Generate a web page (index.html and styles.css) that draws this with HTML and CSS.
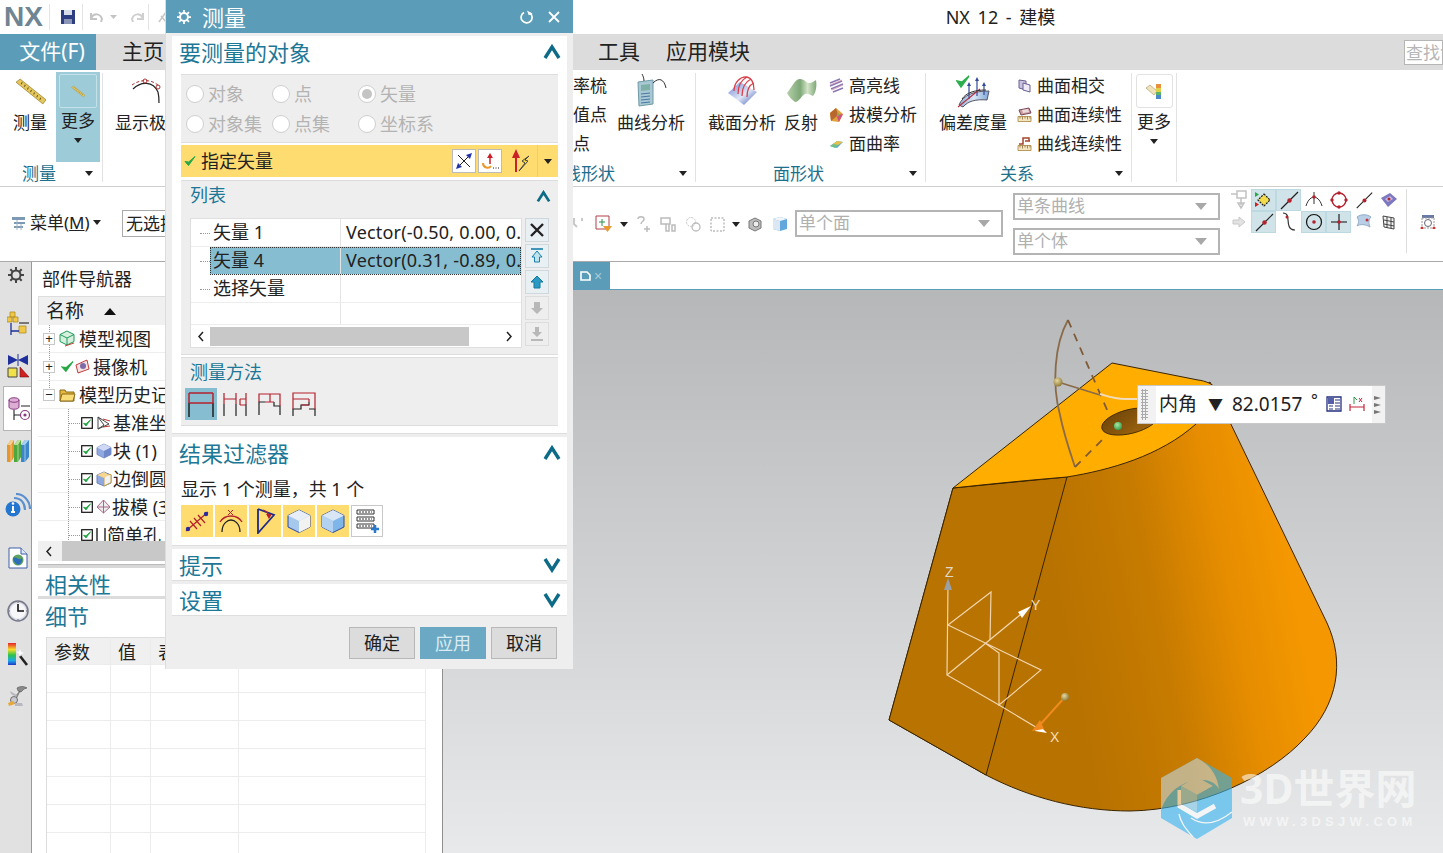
FILE: index.html
```html
<!DOCTYPE html>
<html lang="zh">
<head>
<meta charset="utf-8">
<title>NX 12 - 建模</title>
<link rel="stylesheet" href="styles.css">
</head>
<body>
<svg class="defs" width="0" height="0">
  <symbol id="up" viewBox="0 0 18 16"><path d="M2 14 9 3l7 11" fill="none" stroke="#0d6b87" stroke-width="3.4"/></symbol>
  <symbol id="down" viewBox="0 0 18 16"><path d="M2 2l7 11 7-11" fill="none" stroke="#0d6b87" stroke-width="3.4"/></symbol>
  <symbol id="check" viewBox="0 0 12 12"><path d="M1 6.5 4.5 10.5 11 1.5 4.7 7z" fill="#27a846" stroke="#27a846" stroke-width="1"/></symbol>
  <symbol id="cbox" viewBox="0 0 12 12"><rect x=".7" y=".7" width="10.6" height="10.6" fill="#fff" stroke="#111" stroke-width="1.2"/><path d="M2.5 6.2 5 9l4.6-6.2L5 6.8z" fill="#1fa33f" stroke="#1fa33f" stroke-width=".8"/></symbol>
  <symbol id="cube" viewBox="0 0 16 16"><path d="M8 1 15 4.5V11.500L8 15 1 11.500V4.500z" fill="#8fa8e0" stroke="#6d82b8" stroke-width=".8"/><path d="M1 4.500 8 8l7-3.500L8 1z" fill="#cfd9f3"/><path d="M8 8v7l7-3.500V4.500z" fill="#6f88c9"/></symbol>
  <symbol id="bigcube" viewBox="0 0 26 26"><path d="M13 2 24 7.500V19L13 24.500 2 19V7.500z" fill="#a6c8ec" stroke="#2c4aa0" stroke-width="1"/><path d="M2 7.500 13 13 24 7.500 13 2z" fill="#e8eef8"/><path d="M13 13V24.500L24 19V7.500z" fill="#f2f2f2"/></symbol>
  <symbol id="ruler" viewBox="0 0 30 26"><path d="M1 4 5 1l25 20-3 4z" fill="#e6c75a" stroke="#a08a40" stroke-width=".8"/><path d="M7 4l-1 2M10 6.500l-1 2M13 9l-1 2M16 11.500l-1 2M19 14l-1 2M22 16.500l-1 2M25 19l-1 2" stroke="#6b5a20" stroke-width="1"/></symbol>
  <symbol id="tan" viewBox="0 0 15 6"><path d="M1 .5h13v5H1z" fill="#f3e4c2" stroke="#b89a5a"/><path d="M3 .5v2M5.500 .5v3M8 .5v2M10.500 .5v3M13 .5v2" stroke="#8a6f38" stroke-width=".8"/></symbol>
  <symbol id="caret" viewBox="0 0 8 5"><path d="M0 0h8L4 5z" fill="#222"/></symbol>
  <symbol id="gcaret" viewBox="0 0 12 7"><path d="M0 0h12L6 7z" fill="#a8a8a8"/></symbol>
  <symbol id="node" viewBox="0 0 22 22"><path d="M3 20 20 3" stroke="#222" stroke-width="1.200"/><circle cx="11.500" cy="11.500" r="2.200" fill="#b4202c"/></symbol>
</svg>

<header class="titlebar">
  <div class="qa">
    <span class="nx">NX</span>
    <i class="qa-sep"></i>
    <svg class="qa-save" width="16" height="16" viewBox="0 0 16 16"><path d="M1 1h14v14H1z" fill="#2d3f80"/><path d="M4 1h8v5H4z" fill="#d8dee8"/><path d="M4 10h8v5H4z" fill="#8a95b8"/></svg>
    <i class="qa-sep qa-sep2"></i>
    <svg class="qa-undo" width="62" height="18" viewBox="0 0 62 18"><path d="M5 5v6h6M5 10c3-5 9-5 11 1l-1 3" fill="none" stroke="#c4c4c4" stroke-width="2"/><path d="M24 7h7l-3.500 4z" fill="#c4c4c4"/><path d="M57 5v6h-6M57 10c-3-5-9-5-11 1l1 3" fill="none" stroke="#cfcfcf" stroke-width="2"/></svg>
    <i class="qa-sep"></i>
    <svg class="qa-cut" width="9" height="14" viewBox="0 0 9 14"><path d="M1 12 8 2M3 6l5 6" stroke="#c8c8c8" stroke-width="1.600"/></svg>
  </div>
  <div class="app-title">NX 12 - 建模</div>
</header>

<nav class="menubar">
  <span class="menu-file">文件(F)</span>
  <span class="menu-item menu-home">主页</span>
  <span class="menu-item menu-tools">工具</span>
  <span class="menu-item menu-app">应用模块</span>
  <span class="menu-search">查找命令</span>
</nav>

<section class="ribbon">
  <div class="group g-measure">
    <div class="group-body">
      <div class="rb rb-measure">
        <div class="rb-ico"><svg width="31" height="27"><use href="#ruler"/></svg></div>
        <div class="rb-text">测量</div>
      </div>
      <div class="rb rb-more">
        <div class="rb-inner"><svg width="14" height="13"><use href="#ruler"/></svg></div>
        <div class="rb-text">更多</div>
        <svg class="rb-caret" width="8" height="5"><use href="#caret"/></svg>
      </div>
    </div>
    <div class="group-label lab-measure"><span>测量</span><svg width="8" height="5"><use href="#caret"/></svg></div>
  </div>

  <div class="group g-curve">
    <div class="group-body">
      <div class="rb rb-pole">
        <div class="rb-ico"><svg width="32" height="27" viewBox="0 0 32 27"><path d="M2 11C10 3 22 3 27 14c1 4 1 7 1 11" fill="none" stroke="#222" stroke-width="1.200"/><path d="M1 7c8-6 20-6 27 1" fill="none" stroke="#a33" stroke-width="1" stroke-dasharray="3 2"/><circle cx="14" cy="3" r="2" fill="none" stroke="#a33"/><circle cx="27" cy="9" r="2" fill="none" stroke="#a33"/></svg></div>
        <div class="rb-text">显示极点</div>
      </div>
      <div class="rb-col rb-col-curve">
        <div class="rb-line">显示曲率梳</div>
        <div class="rb-line">显示极值点</div>
        <div class="rb-line">显示拐点</div>
      </div>
      <div class="rb rb-canal">
        <div class="rb-ico"><svg width="36" height="34" viewBox="0 0 36 34"><path d="M5 8l15-2v24L6 32z" fill="#a8c8d4" stroke="#6f9aa8"/><path d="M8 11l9-1v6l-9 1z" fill="#7fb0a8"/><path d="M8 20l9-1M8 23l9-1M8 26l9-1M8 29l9-1" stroke="#4a78a0" stroke-width="1.200"/><path d="M11 7C11 4 10 2 9 0M20 9C26 3 31 5 33 14" fill="none" stroke="#333"/></svg></div>
        <div class="rb-text">曲线分析</div>
      </div>
    </div>
    <div class="group-label lab-curve"><span>曲线形状</span><svg width="8" height="5"><use href="#caret"/></svg></div>
  </div>

  <div class="group g-face">
    <div class="group-body">
      <div class="rb rb-section">
        <div class="rb-ico"><svg width="31" height="30" viewBox="0 0 31 30"><defs><linearGradient id="sec" x1="0" y1="0" x2="1" y2="1"><stop offset="0" stop-color="#6f86d8"/><stop offset=".55" stop-color="#dfe6f4"/><stop offset="1" stop-color="#3f58b8"/></linearGradient></defs><path d="M1 17 13 6l17 10-13 13z" fill="url(#sec)"/><path d="M7 15C7 6 14 0 20 1c5 1 7 6 7 13M11 18C11 10 14 4 20 1M15 20C15 12 18 6 24 3M20 21C20 15 22 9 27 7" fill="none" stroke="#d8404c" stroke-width="1.300"/></svg></div>
        <div class="rb-text">截面分析</div>
      </div>
      <div class="rb rb-reflect">
        <div class="rb-ico"><svg width="31" height="26" viewBox="0 0 31 26"><defs><linearGradient id="ref" x1="0" y1="0" x2="1" y2="0"><stop offset="0" stop-color="#b4cfa8"/><stop offset=".45" stop-color="#7ea878"/><stop offset=".7" stop-color="#d4e4c8"/><stop offset="1" stop-color="#7ea878"/></linearGradient></defs><path d="M1 15C6 9 9 1 14 1c5 0 6 4 9 4s5-2 7-3c1 6 0 12-3 16-3-1-5-3-8-2-3 1-6 8-10 8C6 22 3 19 1 15z" fill="url(#ref)"/></svg></div>
        <div class="rb-text">反射</div>
      </div>
      <div class="rb-col rb-col-face">
        <div class="rb-line"><svg width="15" height="15" viewBox="0 0 15 15"><path d="M1 5 11 1M1 8l12-5M2 11l12-5M4 14l10-4" stroke="#8a78b4" stroke-width="1.500"/><path d="M1 7l12-5M3 12l11-5" stroke="#d58ca6" stroke-width=".7"/></svg>高亮线</div>
        <div class="rb-line"><svg width="15" height="16" viewBox="0 0 15 16"><path d="M7 1 14 7 10 15 2 14 1 6z" fill="#e0a13a"/><path d="M7 1 9 8 2 14 1 6z" fill="#b8682c"/><path d="M7 8l7-1-4 8z" fill="#d0527c"/><path d="M8 5l3 3-3 2z" fill="#8aa84c"/></svg>拔模分析</div>
        <div class="rb-line"><svg width="15" height="12" viewBox="0 0 15 12"><path d="M1 8 8 3l6 1-6 6z" fill="#5da8c8"/><path d="M3 7l5-4 6 1-5 3z" fill="#e9c14a"/><path d="M1 8l4-2 4 1-3 3z" fill="#6fc08a"/></svg>面曲率</div>
      </div>
    </div>
    <div class="group-label lab-face"><span>面形状</span><svg width="8" height="5"><use href="#caret"/></svg></div>
  </div>

  <div class="group g-rel">
    <div class="group-body">
      <div class="rb rb-dev">
        <div class="rb-ico"><svg width="34" height="33" viewBox="0 0 34 33"><defs><linearGradient id="dev" x1="0" y1="0" x2="1" y2="0"><stop offset="0" stop-color="#8fb4dc"/><stop offset=".5" stop-color="#d8e6f4"/><stop offset="1" stop-color="#7fa8d8"/></linearGradient></defs><path d="M3 30C7 20 18 16 33 16l-2 9C20 24 12 26 7 32z" fill="url(#dev)" stroke="#556"/><path d="M1 6l4 6 8-11-7 6z" fill="#2dae4e" stroke="#2dae4e" stroke-width="1.500"/><path d="M13 24V10M21 21V5M28 20V10" stroke="#334a9a" stroke-width="1.200"/><path d="M13 7l-2 4h4zM21 2l-2 4h4zM28 7l-2 4h4z" fill="#334a9a"/><path d="M2 32 24 14" stroke="#b53040" stroke-width="1.100"/><path d="M6 24c4-6 12-9 24-9" fill="none" stroke="#333"/></svg></div>
        <div class="rb-text">偏差度量</div>
      </div>
      <div class="rb-col rb-col-rel">
        <div class="rb-line"><svg width="15" height="15" viewBox="0 0 15 15"><path d="M2 2l7 1v9l-7-2z" fill="#c9c4de" stroke="#6a5e90"/><path d="M6 5l7 2v7l-7-2z" fill="#eeebf6" stroke="#6a5e90"/></svg>曲面相交</div>
        <div class="rb-line"><svg width="15" height="15" viewBox="0 0 15 15"><path d="M2 3l10-2 2 5-10 2z" fill="#c89aa0" stroke="#7a4a58"/><path d="M5 3l6-1 1 3-6 1z" fill="#ecd9dc"/><use href="#tan" y="9" width="15" height="6"/></svg>曲面连续性</div>
        <div class="rb-line"><svg width="15" height="15" viewBox="0 0 15 15"><path d="M2 8h4V2h6v3M8 5h5" fill="none" stroke="#a2462a" stroke-width="1.500"/><use href="#tan" y="9" width="15" height="6"/></svg>曲线连续性</div>
      </div>
    </div>
    <div class="group-label lab-rel"><span>关系</span><svg width="8" height="5"><use href="#caret"/></svg></div>
  </div>

  <div class="group g-extra">
    <div class="group-body">
      <div class="rb rb-extra">
        <div class="rb-box"><svg width="16" height="15" viewBox="0 0 16 15"><path d="M0 4 4 1l7 6-3 4z" fill="#efe2bd" stroke="#b8a26a" stroke-width=".7"/><path d="M10 0h5v4h-5z" fill="#e8913a"/><path d="M10 4h5v4h-5z" fill="#dfd04a"/><path d="M10 8h5v3h-5z" fill="#5cb36a"/><path d="M10 11h5v4h-5z" fill="#4b88c8"/></svg></div>
        <div class="rb-text">更多</div>
        <svg class="rb-caret" width="8" height="5"><use href="#caret"/></svg>
      </div>
    </div>
  </div>
</section>

<section class="selbar">
  <div class="sel-menu">
    <svg width="17" height="16" viewBox="0 0 17 16"><path d="M2 2h13v3H2zM4 7h11v2H4zM4 11h9v2H4z" fill="#7d9ab5"/><path d="M7 5v10M11 9v6" stroke="#9fb4c7"/></svg>
    <span>菜单(<u>M</u>)</span>
    <svg width="8" height="5"><use href="#caret"/></svg>
  </div>
  <div class="sel-box">无选择过滤器</div>
  <div class="sel-icons">
    <svg width="16" height="16" viewBox="0 0 16 16"><path d="M4 2v6l3 3M12 2v3" fill="none" stroke="#c9c9c9" stroke-width="2"/></svg>
    <svg width="18" height="18" viewBox="0 0 18 18"><path d="M1 1h13v13H1z" fill="#fff" stroke="#b0404a"/><path d="M7 4v7M4 7h6" stroke="#2f8f4e"/><path d="M8 11h9l-4.500 6z" fill="#e89a2c"/></svg>
    <svg class="ic-caret" width="8" height="5"><use href="#caret"/></svg>
    <svg width="16" height="18" viewBox="0 0 16 18"><path d="M3 4c0-3 6-3 6 0 0 3-3 2-3 5M9 14h6M12 11v6" fill="none" stroke="#bcbcbc" stroke-width="1.500"/></svg>
    <svg width="16" height="16" viewBox="0 0 16 16"><path d="M1 2h9v6H1zM6 8h3v7H6zM12 9h3v6h-3z" fill="none" stroke="#bcbcbc" stroke-width="1.500"/></svg>
    <svg width="16" height="16" viewBox="0 0 16 16"><circle cx="6" cy="6" r="4.500" fill="none" stroke="#c4c4c4" stroke-dasharray="2 1"/><circle cx="11" cy="11" r="4" fill="none" stroke="#bcbcbc" stroke-width="1.300"/></svg>
    <svg width="15" height="15" viewBox="0 0 15 15"><rect x="1" y="1" width="13" height="13" fill="none" stroke="#9a9a9a" stroke-dasharray="2 1.500"/></svg>
    <svg class="ic-caret" width="8" height="5"><use href="#caret"/></svg>
    <svg width="16" height="15" viewBox="0 0 16 15"><path d="M2 4 8 1l6 3v7l-6 3-6-3z" fill="#bdbdbd" stroke="#777"/><circle cx="9" cy="7" r="3" fill="#eee" stroke="#777"/></svg>
    <svg width="16" height="16" viewBox="0 0 16 16"><path d="M1 3l7-2 7 2v10l-7 2-7-2z" fill="#62a8dc"/><path d="M1 3l7 2v10l-7-2z" fill="#dbe8f3"/><path d="M1 3l7 2 7-2-7-2z" fill="#f2f6fa"/></svg>
  </div>
  <div class="sel-single">单个面<svg width="12" height="7"><use href="#gcaret"/></svg></div>
  <div class="sel-stack">
    <div class="sel-wide">单条曲线<svg width="12" height="7"><use href="#gcaret"/></svg></div>
    <div class="sel-wide">单个体<svg width="12" height="7"><use href="#gcaret"/></svg></div>
  </div>
  <div class="snap">
    <div class="snap-cell"><svg width="18" height="20" viewBox="0 0 18 20"><path d="M1 4h6M7 1h9v7H7zM11 8v7M8 13h6l-3 5z" fill="none" stroke="#c2c2c2" stroke-width="1.500"/></svg></div>
    <div class="snap-cell on"><svg width="18" height="18" viewBox="0 0 18 18"><path d="M9 3l6 6-6 6-6-6z" fill="#f3dc4c" stroke="#222" stroke-width="1.200" stroke-dasharray="2 1"/><path d="M0 1l4 2.500L0 6z" fill="#2aa84a"/><path d="M0 11l4 2.500L0 16z" fill="#c22"/></svg></div>
    <div class="snap-cell on"><svg width="22" height="22"><use href="#node"/></svg></div>
    <div class="snap-cell"><svg width="20" height="18" viewBox="0 0 20 18"><path d="M2 15C4 8 8 6 10 6s6 2 8 9M10 1v12" fill="none" stroke="#333"/><circle cx="10" cy="6" r="1.800" fill="#b4202c"/></svg></div>
    <div class="snap-cell"><svg width="18" height="18" viewBox="0 0 18 18"><circle cx="9" cy="9" r="7" fill="none" stroke="#b4202c" stroke-width="1.300"/><circle cx="9" cy="2" r="1.700" fill="#b4202c"/><circle cx="9" cy="16" r="1.700" fill="#b4202c"/><circle cx="2" cy="9" r="1.700" fill="#b4202c"/><circle cx="16" cy="9" r="1.700" fill="#b4202c"/></svg></div>
    <div class="snap-cell"><svg width="20" height="20"><use href="#node"/></svg></div>
    <div class="snap-cell"><svg width="18" height="16" viewBox="0 0 18 16"><path d="M1 6 10 1l7 6-9 8z" fill="#7d78c0"/><path d="M5 7l5-3 3 3-5 3z" fill="#c0bce6"/><circle cx="9" cy="7" r="1.500" fill="#b4202c"/></svg></div>

    <div class="snap-cell"><svg width="14" height="12" viewBox="0 0 14 12"><path d="M1 4h6V1l6 5-6 5V8H1z" fill="#e3e3e3" stroke="#c8c8c8"/></svg></div>
    <div class="snap-cell on"><svg width="22" height="22"><use href="#node"/></svg></div>
    <div class="snap-cell"><svg width="16" height="20" viewBox="0 0 16 20"><path d="M2 1c7 0 4 9 6 13 1 3 4 4 6 4" fill="none" stroke="#333" stroke-width="1.200"/><circle cx="6" cy="5" r="1.500" fill="#b4202c"/></svg></div>
    <div class="snap-cell on"><svg width="18" height="18" viewBox="0 0 18 18"><circle cx="9" cy="9" r="7.500" fill="none" stroke="#111" stroke-width="1.200"/><circle cx="9" cy="9" r="1.800" fill="#b4202c"/></svg></div>
    <div class="snap-cell on"><svg width="18" height="18" viewBox="0 0 18 18"><path d="M9 1v16M1 9h16" stroke="#111" stroke-width="1.100"/><circle cx="9" cy="9" r="1.800" fill="#b4202c"/></svg></div>
    <div class="snap-cell"><svg width="18" height="18" viewBox="0 0 18 18"><path d="M2 4c4-3 10-3 14 0-2 2-3 5-1 10-5-3-10-3-13-1 2-3 2-6 0-9z" fill="#b9cfe6" stroke="#8eaac5"/><circle cx="12" cy="7" r="1.500" fill="#c9303c"/></svg></div>
    <div class="snap-cell"><svg width="14" height="16" viewBox="0 0 14 16"><path d="M1 2l11 2v11L2 13z" fill="#f3f3f3" stroke="#444"/><path d="M5 3v11M9 4v10M2 6l10 2M2 10l10 2" stroke="#444"/></svg></div>
  </div>
  <div class="sel-end"><svg width="16" height="15" viewBox="0 0 16 15"><path d="M2 1h12v3H2z" fill="#6a7aa8"/><rect x="2" y="4" width="12" height="10" fill="none" stroke="#999" stroke-dasharray="2 1"/><circle cx="8" cy="9" r="3.500" fill="none" stroke="#667"/><circle cx="2" cy="14" r="1.500" fill="#c33"/><circle cx="14" cy="14" r="1.500" fill="#c33"/></svg></div>
</section>

<main class="work">
  <aside class="rail">
    <div class="rail-item r-gear"><svg width="16" height="16" viewBox="0 0 16 16"><circle cx="8" cy="8" r="4.500" fill="none" stroke="#444" stroke-width="2"/><path d="M8 0v3M8 13v3M0 8h3M13 8h3M2.300 2.300l2 2M11.700 11.700l2 2M2.300 13.700l2-2M11.700 4.300l2-2" stroke="#444" stroke-width="2"/></svg></div>
    <div class="rail-item r-assy"><svg width="22" height="26" viewBox="0 0 22 26"><path d="M3 1h5v5H3zM0 6h5v5H0zM6 6h5v5H6z" fill="#efc84a" stroke="#b38a20" stroke-width=".8"/><path d="M12 15h7v7h-7z" fill="#efc84a" stroke="#b38a20" stroke-width=".8"/><path d="M12 12h10" stroke="#222" stroke-width="1.100"/><path d="M4 12v12M4 20h8" stroke="#1d2f9c" stroke-width="1.300"/></svg></div>
    <div class="rail-item r-mirror"><svg width="22" height="24" viewBox="0 0 22 24"><path d="M1 1l10 5L21 1v10L11 6 1 11z" fill="#1f2f9c"/><path d="M11 0v12" stroke="#1f2f9c"/><path d="M1 14h9v9H1z" fill="#f2e24a" stroke="#444"/><path d="M13 23V13l9 10z" fill="#cf1f1f" stroke="#7a1010" stroke-width=".6"/></svg></div>
    <div class="rail-item r-active"><svg width="22" height="24" viewBox="0 0 22 24"><path d="M1 3c0-3 10-3 10 0v7c0 3-10 3-10 0z" fill="#dcaed4" stroke="#873a80"/><path d="M1 3c0 3 10 3 10 0" fill="none" stroke="#873a80"/><path d="M13 9h9M6 13v10M6 18h6" stroke="#222" stroke-width="1.100"/><circle cx="17" cy="18" r="4.500" fill="#fff" stroke="#873a80" stroke-width="1.200"/><circle cx="17" cy="18" r="1.600" fill="#873a80"/></svg></div>
    <div class="rail-item r-books"><svg width="22" height="22" viewBox="0 0 22 22"><path d="M0 5 4 0h3v17l-3 5H0z" fill="#e6962c"/><path d="M0 5 4 0h3L4 5z" fill="#f2cf8c"/><path d="M7 5l4-5h3v17l-3 5H7z" fill="#4fa83c"/><path d="M7 5l4-5h3l-3 5z" fill="#bfe09a"/><path d="M14 5l4-5h4v17l-4 5h-4z" fill="#3b87c9"/><path d="M14 5l4-5h4l-4 5z" fill="#a8d0ee"/><path d="M4 5v17M11 5v17M18 5v17" stroke="#fff" stroke-opacity=".5"/></svg></div>
    <div class="rail-item r-info"><svg width="26" height="24" viewBox="0 0 26 24"><circle cx="8" cy="16" r="7.500" fill="#2476cf"/><path d="M8 13v6M6 19h4" stroke="#fff" stroke-width="2"/><circle cx="8" cy="10.500" r="1.300" fill="#fff"/><path d="M9 5c7 0 11 5 11 12M11 1c8 0 14 7 14 15" fill="none" stroke="#5b90d0" stroke-width="2.200"/></svg></div>
    <div class="rail-item r-doc"><svg width="20" height="22" viewBox="0 0 20 22"><path d="M1 1h12l6 6v14H1z" fill="#fff" stroke="#3e5fa8"/><path d="M13 1v6h6" fill="#dfe8f6" stroke="#3e5fa8"/><circle cx="10" cy="13" r="5.500" fill="#5fa35f"/><path d="M5 11c3-2 6 3 9 0 1 3-1 6-4 7-3-2-5-4-5-7z" fill="#2e6fb8"/></svg></div>
    <div class="rail-item r-clock"><svg width="22" height="22" viewBox="0 0 22 22"><defs><radialGradient id="clk"><stop offset=".7" stop-color="#f7f7fa"/><stop offset="1" stop-color="#b8bcc8"/></radialGradient></defs><circle cx="11" cy="11" r="10" fill="url(#clk)" stroke="#77798a" stroke-width="1.500"/><path d="M11 4v7h6" fill="none" stroke="#111" stroke-width="1.600"/><path d="M11 2v1M11 19v1M2 11h1M19 11h1" stroke="#667"/></svg></div>
    <div class="rail-item r-rainbow"><svg width="22" height="24" viewBox="0 0 22 24"><defs><linearGradient id="rb" x1="0" y1="0" x2="0" y2="1"><stop offset="0" stop-color="#e5242a"/><stop offset=".3" stop-color="#f5dd2a"/><stop offset=".55" stop-color="#2ec24a"/><stop offset=".8" stop-color="#1ea8e8"/><stop offset="1" stop-color="#2038c8"/></linearGradient></defs><path d="M1 1h8v22H1z" fill="url(#rb)"/><path d="M13 14l7 9" stroke="#222" stroke-width="2.600"/><path d="M9 9l3 1 1-3 1 3 3 1-3 1-1 3-1-3z" fill="#fff"/></svg></div>
    <div class="rail-item r-tool"><svg width="20" height="22" viewBox="0 0 20 22"><path d="M9 3c3-2 7-2 10 0l-3 1-3 3-3-1z" fill="#8a8a8a" stroke="#555" stroke-width=".6"/><path d="M12 6l-4 8-2-1z" fill="#9a9a9a" stroke="#555" stroke-width=".6"/><circle cx="6" cy="15" r="3.500" fill="#c8c8d0" stroke="#555" stroke-width=".8"/><path d="M9 10l-7-4 1 3 5 3z" fill="#b8b8c0"/><path d="M0 18l5-2 2 3-6 2z" fill="#e8a83a"/><path d="M7 18h7l1 3H7z" fill="#b8b8c0"/></svg></div>
  </aside>

  <section class="nav">
    <div class="nav-title">部件导航器</div>
    <div class="tree">
      <div class="tree-head"><span>名称</span><svg width="12" height="7" viewBox="0 0 12 7"><path d="M6 0l6 7H0z" fill="#111"/></svg></div>
      <div class="tree-row top"><i class="pm">+</i><svg class="ti" width="17" height="17" viewBox="0 0 17 17"><path d="M8 1l7 3.500v7L8 15l-7-3.500v-7z" fill="#d6f0dd" stroke="#1f9a5c"/><path d="M1 4.500 8 8l7-3.500M8 8v7" fill="none" stroke="#1f9a5c"/><path d="M6 16l9-3" stroke="#c43"/></svg><span>模型视图</span></div>
      <div class="tree-row top"><i class="pm">+</i><svg class="chk" width="13" height="13"><use href="#check"/></svg><svg class="ti" width="15" height="15" viewBox="0 0 15 15"><path d="M1 6l11-5 2 9-11 4z" fill="#f3e3e3" stroke="#c23b3b"/><circle cx="8" cy="7" r="3" fill="#7e6aa8"/></svg><span>摄像机</span></div>
      <div class="tree-row top last"><i class="pm">−</i><svg class="ti" width="17" height="15" viewBox="0 0 17 15"><path d="M1 3h5l1 2h8v9H1z" fill="#e8b83c" stroke="#8a6a1a"/><path d="M3 7h13l-2 7H1z" fill="#f8dc78" stroke="#8a6a1a"/></svg><span>模型历史记录</span></div>
      <div class="tree-row child"><svg class="cb" width="12" height="12"><use href="#cbox"/></svg><svg class="ti" width="16" height="16" viewBox="0 0 16 16"><path d="M2 2v12l6-4zM2 14l11-5M2 2l11 7" fill="none" stroke="#444"/><path d="M7 4l7 2M7 12l7-1" stroke="#b33"/></svg><span>基准坐标系 (0)</span></div>
      <div class="tree-row child"><svg class="cb" width="12" height="12"><use href="#cbox"/></svg><svg class="ti" width="16" height="16"><use href="#cube"/></svg><span>块 (1)</span></div>
      <div class="tree-row child"><svg class="cb" width="12" height="12"><use href="#cbox"/></svg><svg class="ti" width="16" height="16" viewBox="0 0 16 16"><path d="M1 4 8 1l7 3v8l-7 3-7-3z" fill="#8fa8e0" stroke="#6d82b8"/><path d="M8 4l7-.5v8L8 15z" fill="#f2f2f2" stroke="#c9a24a"/><path d="M1 4l7 3 5-3-5-3z" fill="#f7d58a"/></svg><span>边倒圆 (2)</span></div>
      <div class="tree-row child"><svg class="cb" width="12" height="12"><use href="#cbox"/></svg><svg class="ti" width="15" height="15" viewBox="0 0 15 15"><path d="M7.500 1 14 8l-6.500 6L1 8z" fill="#eee" stroke="#a86a8a"/><path d="M7.500 1v13M1 8h13" stroke="#a86a8a"/></svg><span>拔模 (3)</span></div>
      <div class="tree-row child"><svg class="cb" width="12" height="12"><use href="#cbox"/></svg><svg class="ti" width="10" height="16" viewBox="0 0 10 16"><path d="M1 1v14h8V1" fill="none" stroke="#222" stroke-width="1.400"/></svg><span>简单孔 (4)</span></div>
      <div class="hscroll"><svg width="8" height="11" viewBox="0 0 8 11"><path d="M6 1 2 5.500 6 10" fill="none" stroke="#222" stroke-width="1.500"/></svg><div class="hthumb"></div></div>
    </div>
    <div class="sash"></div>
    <div class="panel-h">相关性</div>
    <div class="panel-h detail">细节</div>
    <div class="param">
      <div class="p-cell head">参数</div><div class="p-cell head">值</div><div class="p-cell head">表达式</div><div class="p-cell head"></div>
      <div class="p-cell"></div><div class="p-cell"></div><div class="p-cell"></div><div class="p-cell"></div>
      <div class="p-cell"></div><div class="p-cell"></div><div class="p-cell"></div><div class="p-cell"></div>
      <div class="p-cell"></div><div class="p-cell"></div><div class="p-cell"></div><div class="p-cell"></div>
      <div class="p-cell"></div><div class="p-cell"></div><div class="p-cell"></div><div class="p-cell"></div>
      <div class="p-cell"></div><div class="p-cell"></div><div class="p-cell"></div><div class="p-cell"></div>
      <div class="p-cell"></div><div class="p-cell"></div><div class="p-cell"></div><div class="p-cell"></div>
      <div class="p-cell"></div><div class="p-cell"></div><div class="p-cell"></div><div class="p-cell"></div>
    </div>
  </section>

  <section class="view">
    <div class="tabs">
      <div class="tab"><svg width="11" height="11" viewBox="0 0 11 11"><path d="M1 2h6l3 3v5H1z" fill="none" stroke="#fff" stroke-width="1.600"/></svg><span>×</span></div>
    </div>
    <div class="canvas">
      <svg class="model" viewBox="443 290 1000 563" width="1000" height="563">
        <defs>
          <linearGradient id="body" gradientUnits="userSpaceOnUse" x1="1060" y1="620" x2="1290" y2="575">
            <stop offset="0" stop-color="#b87200"/>
            <stop offset=".42" stop-color="#c77b00"/>
            <stop offset=".72" stop-color="#e58c00"/>
            <stop offset="1" stop-color="#f49700"/>
          </linearGradient>
          <linearGradient id="hole" x1="0" y1="0" x2="1" y2="1">
            <stop offset="0" stop-color="#6a4208"/>
            <stop offset="1" stop-color="#a56a10"/>
          </linearGradient>
          <radialGradient id="ball" cx=".4" cy=".35" r=".7"><stop offset="0" stop-color="#e6d9a0"/><stop offset="1" stop-color="#8a7430"/></radialGradient>
          <radialGradient id="gball" cx=".4" cy=".35" r=".7"><stop offset="0" stop-color="#a8e8a0"/><stop offset="1" stop-color="#2f9a4a"/></radialGradient>
        </defs>
        <path d="M953 488 889 720 986 775C1030 798 1080 811 1130 811 1200 810 1270 776 1305 738 1338 704 1345 662 1327 623L1226 414 1210 382 1067 477z" fill="url(#body)" stroke="#3a2400" stroke-width="1"/>
        <path d="M953 488 889 720 986 775 1067 477z" fill="#b97300" stroke="#3a2400" stroke-width="1"/>
        <path d="M953 488 1112 363 1198 380C1206 381 1212 384 1216 388 1218 400 1210 412 1196 424 1160 456 1110 470 1067 477 1030 480 990 484 953 488z" fill="#ffae00" stroke="#3a2400" stroke-width="1"/>
        <ellipse cx="1130" cy="421.500" rx="29" ry="12" transform="rotate(-14 1130 421.500)" fill="url(#hole)" stroke="#3a2400" stroke-width=".8"/>
        <path d="M1068 320C1054 345 1052 385 1060 415 1064 435 1070 452 1075 467" fill="none" stroke="#8a6a48" stroke-width="1.800"/>
        <path d="M1068 320 1108 412M1075 467 1106 436" fill="none" stroke="#7f5a38" stroke-width="1.800" stroke-dasharray="8 7"/>
        <path d="M1058 382 1100 395" stroke="#8a6a48" stroke-width="1.800"/>
        <path d="M1100 394C1110 397 1115 399 1125 399H1140" fill="none" stroke="#f3dcbc" stroke-width="2"/>
        <circle cx="1058" cy="382" r="4.500" fill="url(#ball)"/>
        <circle cx="1118" cy="426" r="4" fill="url(#gball)"/>
        <g fill="none" stroke="#f0d5ae" stroke-width="1.200">
          <path d="M948 585 947 675 999 705 1039 729"/>
          <path d="M948 625 991 592 990 640"/>
          <path d="M948 625 1041 670 999 705 999 653 985 643"/>
          <path d="M947 675 1020 615"/>
        </g>
        <path d="M948 578 944 590H952z" fill="#9aa0a6"/>
        <path d="M1031 606 1018 612 1022 618z" fill="#fff"/>
        <path d="M1047 733 1038 724 1035 731z" fill="#fff"/>
        <path d="M1065 697 1038 727" stroke="#f08a1e" stroke-width="2"/>
        <path d="M1032 731 1040 720 1044 729z" fill="#f08a1e"/>
        <circle cx="1065" cy="697" r="4" fill="url(#ball)"/>
      </svg>
      <div class="axis ax-z">Z</div>
      <div class="axis ax-y">Y</div>
      <div class="axis ax-x">X</div>

      <div class="tag">
        <div class="tag-grip"></div>
        <div class="tag-inner">
          <span class="tag-name">内角</span>
          <span class="tag-arrow">▼</span>
          <span class="tag-val">82.0157</span>
          <span class="tag-deg">°</span>
          <svg class="tag-ic" width="16" height="16" viewBox="0 0 16 16"><path d="M1 1h14v14H1z" fill="#fff" stroke="#26307f" stroke-width="1.300"/><path d="M2 2h6v6H2z" fill="#5560a8"/><path d="M9 4h5M9 7h5M3 10h4M3 13h4M9 10h5M9 13h5" stroke="#26307f"/></svg>
          <svg class="tag-ic" width="16" height="16" viewBox="0 0 16 16"><path d="M1 8v7M15 8v7M1 11h14" stroke="#c2283a" stroke-width="1.200"/><path d="M5 1v7M5 1l3 3" stroke="#2a9a4a" fill="none"/><path d="M10 2l3 4M13 2l-3 4" stroke="#c2283a"/></svg>
        </div>
        <div class="tag-side"><i></i><i></i><i></i></div>
      </div>

      <svg class="wm-logo" width="71" height="81" viewBox="0 0 71 81">
        <g opacity=".6">
          <path d="M36 0 71 20V60L36 81 0 60V20z" fill="#35b4f2"/>
          <path d="M36 0 0 20V52C6 34 20 24 36 22 46 21 54 24 58 31 56 16 48 6 36 0z" fill="#c3d8e2"/>
          <path d="M19 32V48L36 58 54 48" fill="none" stroke="#fff" stroke-width="5"/>
          <path d="M20 28 36 19l16 9-16 9z" fill="#c3d8e2"/>
          <path d="M20 28l16 9v17L20 46z" fill="#7fc8ea"/>
          <path d="M52 28 36 37v17l16-8z" fill="#35b4f2"/>
          <path d="M18 56C20 66 26 72 32 79M30 60C42 68 56 66 71 54" fill="none" stroke="#fff" stroke-width="1.300"/>
        </g>
      </svg>
      <div class="wm-text">
        <div class="wm-main">3D世界网</div>
        <div class="wm-sub">WWW.3DSJW.COM</div>
      </div>
    </div>
  </section>
</main>

<aside class="dialog">
  <div class="dlg-title">
    <svg width="14" height="14" viewBox="0 0 16 16"><circle cx="8" cy="8" r="4.500" fill="none" stroke="#fff" stroke-width="2.200"/><path d="M8 0v3M8 13v3M0 8h3M13 8h3M2.300 2.300l2 2M11.700 11.700l2 2M2.300 13.700l2-2M11.700 4.300l2-2" stroke="#fff" stroke-width="2"/></svg>
    <span class="dlg-name">测量</span>
    <svg class="dlg-reset" width="14" height="14" viewBox="0 0 14 14"><path d="M5 2.500A5.500 5.500 0 1 0 11 3" fill="none" stroke="#fff" stroke-width="1.700"/><path d="M9 0v5h4z" fill="#fff" transform="rotate(-20 10 3)"/></svg>
    <svg class="dlg-close" width="12" height="12" viewBox="0 0 12 12"><path d="M1 1l10 10M11 1 1 11" stroke="#fff" stroke-width="1.800"/></svg>
  </div>

  <section class="sec sec-obj">
    <div class="sec-h"><span>要测量的对象</span><svg width="18" height="16"><use href="#up"/></svg></div>
    <div class="radios">
      <label class="r"><i></i>对象</label><label class="r"><i></i>点</label><label class="r"><i class="sel"></i>矢量</label>
      <label class="r"><i></i>对象集</label><label class="r"><i></i>点集</label><label class="r"><i></i>坐标系</label>
    </div>
    <div class="yellow">
      <div class="y-main"><svg width="12" height="12"><use href="#check"/></svg><span>指定矢量</span></div>
      <div class="y-btn"><svg width="18" height="18" viewBox="0 0 18 18"><path d="M2 16 16 2M3 3l12 12" stroke="#222" stroke-width="1"/><path d="M1 17l2-6 4 4zM17 1l-2 6-4-4z" fill="#2233a8"/></svg></div>
      <div class="y-btn"><svg width="18" height="18" viewBox="0 0 18 18"><path d="M9 12V3" stroke="#c9202a" stroke-width="1.500"/><path d="M9 1 6 6h6z" fill="#c9202a"/><path d="M2 11c0 5 6 6 8 3" fill="none" stroke="#e89a2c" stroke-width="2"/><path d="M12 16h1M14.500 16h1M17 16h1" stroke="#222"/></svg></div>
      <div class="y-end"><svg width="22" height="26" viewBox="0 0 22 26"><path d="M7 24V8" stroke="#c9202a" stroke-width="2"/><path d="M7 1 3 10h8z" fill="#c9202a"/><path d="M20 8 13 13l3 2-6 8 9-10-3-1z" fill="#f6d542" stroke="#444"/></svg></div>
      <div class="y-drop"><svg width="8" height="5"><use href="#caret"/></svg></div>
    </div>
    <div class="grp">
      <div class="grp-h"><span>列表</span><svg width="17" height="13" viewBox="0 0 18 16"><use href="#up"/></svg></div>
      <div class="list-wrap">
        <div class="list">
          <div class="l-row"><div class="l-a">矢量 1</div><div class="l-b">Vector(-0.50, 0.00, 0.86)</div></div>
          <div class="l-row sel"><div class="l-a">矢量 4</div><div class="l-b">Vector(0.31, -0.89, 0.34)</div></div>
          <div class="l-row"><div class="l-a">选择矢量</div><div class="l-b"></div></div>
          <div class="l-row short"><div class="l-a"></div><div class="l-b"></div></div>
          <div class="l-scroll"><svg width="8" height="11" viewBox="0 0 8 11"><path d="M6 1 2 5.500 6 10" fill="none" stroke="#222" stroke-width="1.500"/></svg><div class="l-thumb"></div><svg width="8" height="11" viewBox="0 0 8 11"><path d="M2 1l4 4.500L2 10" fill="none" stroke="#222" stroke-width="1.500"/></svg></div>
        </div>
        <div class="l-btns">
          <div class="l-btn"><svg width="16" height="16" viewBox="0 0 16 16"><path d="M2 2l12 12M14 2 2 14" stroke="#222" stroke-width="2.400"/></svg></div>
          <div class="l-btn"><svg width="14" height="16" viewBox="0 0 14 16"><path d="M1 1h12" stroke="#1a7fa8" stroke-width="1.600"/><path d="M7 3l5 6H9.500v5h-5V9H2z" fill="#bfe3ee" stroke="#1a7fa8"/></svg></div>
          <div class="l-btn"><svg width="14" height="14" viewBox="0 0 14 14"><path d="M7 1l6 6h-3v6H4V7H1z" fill="#2a9ac4" stroke="#16789e"/></svg></div>
          <div class="l-btn off"><svg width="14" height="14" viewBox="0 0 14 14"><path d="M7 13 1 7h3V1h6v6h3z" fill="#b8b8b8"/></svg></div>
          <div class="l-btn off"><svg width="14" height="16" viewBox="0 0 14 16"><path d="M7 11 2 6h3V1h4v5h3z" fill="#b8b8b8"/><path d="M1 14h12" stroke="#b8b8b8" stroke-width="2"/></svg></div>
        </div>
      </div>
    </div>
    <div class="grp grp-method">
      <div class="grp-h"><span>测量方法</span></div>
      <div class="methods">
        <div class="m on"><svg width="28" height="26" viewBox="0 0 28 26"><path d="M2 26V12M26 26V12" fill="none" stroke="#222" stroke-width="1.500"/><path d="M2 2h24M2 2v10M26 2v10M2 12h24" fill="none" stroke="#b4202c" stroke-width="1.500"/></svg></div>
        <div class="m m2"><svg width="24" height="24" viewBox="0 0 24 24"><path d="M1 24V12M13 24V12M23 24V12" stroke="#222" stroke-width="1.200"/><path d="M1 1v11M13 1v11M23 1v11M1 7h12M17 7h6M17 13h6M17 13V7" fill="none" stroke="#b4202c" stroke-width="1.200"/></svg></div>
        <div class="m m3"><svg width="23" height="24" viewBox="0 0 23 24"><path d="M1 23V10h6M22 23V14h-6v-4" fill="none" stroke="#222" stroke-width="1.200"/><path d="M1 10V2h21v12M12 2v8M7 10h9" fill="none" stroke="#b4202c" stroke-width="1.200"/></svg></div>
        <div class="m m4"><svg width="24" height="24" viewBox="0 0 24 24"><path d="M1 24V17h8v-4h8v-3M23 24v-7h-6" fill="none" stroke="#222" stroke-width="1.200"/><path d="M1 17V1h22v16M1 7h16M17 7v3M9 13h8" fill="none" stroke="#b4202c" stroke-width="1.200"/></svg></div>
      </div>
    </div>
  </section>

  <section class="sec sec-filter">
    <div class="sec-h"><span>结果过滤器</span><svg width="18" height="16"><use href="#up"/></svg></div>
    <div class="count">显示 1 个测量，共 1 个</div>
    <div class="filters">
      <div class="f"><svg width="26" height="24" viewBox="0 0 26 24"><path d="M2 22 24 3" stroke="#b4202c" stroke-width="1.200"/><path d="M6 12l7 8M10 9l7 8M14 6l7 8" stroke="#b4202c" stroke-width="1.200"/><circle cx="4" cy="20" r="2.200" fill="#2a2aa0"/><circle cx="22" cy="5" r="2.200" fill="#2a2aa0"/></svg></div>
      <div class="f"><svg width="26" height="24" viewBox="0 0 26 24"><path d="M4 23C4 14 10 11 13 11s9 3 9 12" fill="none" stroke="#222" stroke-width="1.300"/><path d="M2 13C7 5 19 5 24 13" fill="none" stroke="#b4202c" stroke-width="1.300"/><path d="M10 1l5 5M15 1l-5 5" stroke="#b4202c"/></svg></div>
      <div class="f"><svg width="24" height="26" viewBox="0 0 24 26"><path d="M5 1v24L21 7 5 1" fill="none" stroke="#1d2b8c" stroke-width="1.800"/><path d="M10 2c3 1 5 3 5 5" fill="none" stroke="#b4202c" stroke-width="1.300"/><path d="M19 6l-6 0 3 5z" fill="#b4202c"/></svg></div>
      <div class="f"><svg width="26" height="26"><use href="#bigcube"/></svg></div>
      <div class="f"><svg width="26" height="26" viewBox="0 0 26 26"><path d="M13 2 24 7.500V19L13 24.500 2 19V7.500z" fill="#7fb6ea" stroke="#2c4aa0"/><path d="M2 7.500 13 13 24 7.500 13 2z" fill="#d9e6f6"/><path d="M2 7.500 13 13V24.500L2 19z" fill="#b3d2f2"/></svg></div>
      <div class="f f-add"><svg width="26" height="26" viewBox="0 0 26 26"><path d="M3 2h17v4H3zM3 9h17v4H3zM3 16h17v4H3z" fill="#fff" stroke="#333"/><path d="M5 4h13M5 11h13M5 18h13" stroke="#333" stroke-dasharray="2 1"/><path d="M21 17v8M17 21h8" stroke="#2a78c8" stroke-width="2.500"/></svg></div>
    </div>
  </section>

  <section class="sec sec-fold"><div class="sec-h"><span>提示</span><svg width="18" height="16"><use href="#down"/></svg></div></section>
  <section class="sec sec-fold"><div class="sec-h"><span>设置</span><svg width="18" height="16"><use href="#down"/></svg></div></section>

  <div class="dlg-foot">
    <div class="btn">确定</div>
    <div class="btn primary">应用</div>
    <div class="btn">取消</div>
  </div>
</aside>
</body>
</html>
```

FILE: styles.css
```css
* { box-sizing: border-box; }
html, body { margin: 0; padding: 0; }
body {
  width: 1443px;
  height: 853px;
  overflow: hidden;
  position: relative;
  display: flex;
  flex-direction: column;
  background: #fff;
  color: #222;
  font-family: "Noto Sans", "Noto Sans CJK SC", sans-serif;
  font-size: 17px;
  line-height: 1;
}
.defs { position: absolute; }
svg { display: block; flex: none; }

/* title bar */
.titlebar { height: 34px; flex: none; position: relative; display: flex; align-items: center; justify-content: center; background: #fff; }
.qa { position: absolute; left: 0; top: 0; height: 34px; display: flex; align-items: center; }
.nx { font: bold 28px "Liberation Sans", sans-serif; color: #6f8593; margin-left: 4px; width: 45px; }
.qa-sep { width: 1px; height: 26px; background: #e4e4e4; flex: none; }
.qa-save { margin-left: 10px; }
.qa-sep2 { margin-left: 6px; }
.qa-undo { margin-left: 3px; }
.qa-cut { margin-left: 9px; }
.app-title { font-size: 18px; margin-left: 558px; color: #222; word-spacing: 3px; }

/* menu */
.menubar { height: 36px; flex: none; background: #dcdcdc; display: flex; align-items: center; position: relative; font-size: 21px; }
.menu-file { width: 96px; height: 36px; background: #5b9db8; color: #fff; display: flex; align-items: center; justify-content: center; padding: 0 0 1px 8px; }
.menu-item { color: #222; padding-bottom: 1px; }
.menu-home { margin-left: 26px; }
.menu-tools { margin-left: 434px; }
.menu-app { margin-left: 26px; }
.menu-search { margin-left: auto; width: 39px; height: 25px; background: #fff; border: 1px solid #b5b5b5; color: #b5b5b5; font-size: 17px; overflow: hidden; white-space: nowrap; padding: 3px 0 0 1px; }

/* ribbon */
.ribbon { height: 117px; flex: none; display: flex; background: #fff; border-bottom: 1px solid #cfcfcf; }
.group { display: flex; flex-direction: column; height: 116px; position: relative; }
.group::after { content: ""; position: absolute; right: 0; top: 3px; bottom: 4px; width: 1px; background: #e2e2e2; }
.group-body { flex: 1; display: flex; min-height: 0; }
.group-label { height: 25px; flex: none; display: flex; align-items: center; color: #1d6f8c; position: relative; padding-bottom: 1px; }
.g-measure { width: 103px; }
.g-curve { width: 593px; }
.g-face { width: 230px; }
.g-rel { width: 206px; }
.g-extra { width: 45px; }
.rb { display: flex; flex-direction: column; align-items: center; flex: none; }
.rb-ico { height: 34px; margin-top: 4px; display: flex; align-items: center; justify-content: center; }
.rb-text { margin-top: 6px; white-space: nowrap; }
.rb-measure { width: 60px; margin-right: -4px; }
.rb-more { width: 44px; margin: 2px 0 0 0; height: 90px; background: #9ecbd8; }
.rb-inner { width: 38px; height: 34px; margin-top: 2px; border: 1px solid #c3e1e9; border-radius: 2px; display: flex; align-items: center; justify-content: center; }
.rb-more .rb-text { margin-top: 4px; }
.rb-caret { margin-top: 9px; }
.rb-pole { margin-left: 12px; width: 69px; overflow: hidden; align-items: flex-start; }
.rb-pole .rb-ico { margin-left: 16px; }
.rb-col { display: flex; flex-direction: column; gap: 12px; padding-top: 7px; flex: none; }
.rb-line { display: flex; align-items: center; gap: 5px; height: 17px; white-space: nowrap; }
.rb-col-curve { margin-left: 338px; width: 92px; }
.rb-canal { margin-left: 3px; width: 68px; }
.rb-section { margin-left: 12px; width: 68px; }
.rb-reflect { margin-left: 8px; width: 34px; }
.rb-col-face { margin-left: 11px; }
.rb-dev { margin-left: 13px; width: 68px; }
.rb-col-rel { margin-left: 10px; }
.rb-extra { width: 38px; margin-left: 3px; }
.rb-box { width: 37px; height: 34px; margin-top: 4px; border: 1px solid #e2e2e2; border-radius: 3px; display: flex; align-items: center; justify-content: center; }
.rb-extra .rb-text { margin-top: 5px; }
.lab-measure span { margin-left: 22px; }
.lab-measure svg { margin-left: 29px; }
.lab-curve span { margin-left: 444px; }
.lab-curve svg { margin-left: 64px; }
.lab-face span { margin-left: 77px; }
.lab-face svg { margin-left: 85px; }
.lab-rel span { margin-left: 74px; }
.lab-rel svg { margin-left: 81px; }

/* selection bar */
.selbar { height: 74px; flex: none; display: flex; background: #fff; align-items: flex-start; position: relative; }
.sel-menu { display: flex; align-items: center; gap: 3px; margin: 27px 0 0 10px; width: 101px; }
.sel-box { width: 200px; height: 27px; margin-top: 23px; margin-left: 11px; border: 1px solid #aaa; padding: 4px 3px; white-space: nowrap; overflow: hidden; }
.sel-icons { display: flex; align-items: center; margin: 27px 0 0 248px; height: 20px; gap: 9px; width: 220px; }
.sel-icons .ic-caret { margin: 0 -2px; }
.sel-single, .sel-wide { height: 27px; border: 2px solid #b4b4b4; color: #b0b0b0; display: flex; align-items: center; justify-content: space-between; padding: 0 11px 3px 2px; }
.sel-single svg, .sel-wide svg { margin-top: 3px; }
.sel-single { width: 208px; margin-top: 23px; margin-left: 5px; }
.sel-stack { display: flex; flex-direction: column; gap: 8px; margin: 6px 0 0 10px; width: 207px; }
.snap { display: grid; grid-template-columns: repeat(7, 25px); grid-auto-rows: 22px; margin: 2px 0 0 6px; }
.snap-cell { display: flex; align-items: center; justify-content: center; }
.snap-cell.on { background: #cfe3e8; border: 1px solid #bcd8e0; }
.sel-end { margin: 2px 0 0 5px; padding: 0 0 0 13px; height: 64px; border-left: 1px solid #ddd; display: flex; align-items: center; }

/* work */
.work { flex: 1; display: flex; min-height: 0; border-top: 1px solid #a9a9a9; }
.rail { width: 32px; flex: none; background: #e1e1e1; border-right: 1px solid #999; display: flex; flex-direction: column; align-items: center; }
.rail-item { height: 26px; width: 100%; padding-left: 4px; display: flex; align-items: center; justify-content: center; flex: none; }
.r-gear { margin-top: 0; padding-left: 0; }
.r-assy { margin-top: 23px; }
.r-mirror { margin-top: 16px; }
.r-active { margin-top: 7px; height: 45px; margin-left: 3px; width: 28px; padding-left: 3px; background: #fff; border: 1px solid #b5b5b5; border-right: 0; }
.r-books { margin-top: 7px; }
.r-info { margin-top: 28px; }
.r-doc { margin-top: 27px; }
.r-clock { margin-top: 27px; }
.r-rainbow { margin-top: 17px; }
.r-tool { margin-top: 16px; }

.nav { width: 411px; flex: none; background: #fff; border-right: 1px solid #8f8f8f; display: flex; flex-direction: column; padding: 0 0 0 6px; overflow: hidden; }
.nav-title { height: 34px; flex: none; display: flex; align-items: center; padding: 0 0 0 4px; font-size: 18px; }
.tree { height: 265px; overflow: hidden; flex: none; border-top: 1px solid #ddd; font-size: 18px; background: #fff; position: relative; }
.tree-head { height: 28px; background: #f0f0f0; display: flex; align-items: center; padding: 0 0 0 7px; font-size: 19px; gap: 20px; border-left: 1px solid #ddd; }
.tree-row { height: 28px; display: flex; align-items: center; padding-left: 5px; border-bottom: 1px solid #eee; white-space: nowrap; position: relative; }
.tree-row span { margin-left: 3px; }
.pm { width: 12px; height: 12px; border: 1px solid #c8c8c8; background: #fff; font: normal 13px/10px "Liberation Sans", sans-serif; text-align: center; margin-right: 3px; flex: none; position: relative; z-index: 1; }
.chk { margin-left: 3px; }
.ti { margin-left: 1px; }
.tree-row.top::before { content: ""; position: absolute; left: 11px; top: 0; bottom: 0; border-left: 1px dotted #9a9a9a; }
.tree-row.top.last::before { bottom: 14px; }
.tree-row.child { padding-left: 43px; }
.tree-row.child span { margin-left: 1px; }
.tree-row.child::before { content: ""; position: absolute; left: 30px; top: 0; bottom: 0; border-left: 1px dotted #9a9a9a; }
.tree-row.child::after { content: ""; position: absolute; left: 31px; top: 14px; width: 11px; border-top: 1px dotted #9a9a9a; }
.cb { margin-right: 2px; }
.hscroll { height: 20px; background: #f0f0f0; display: flex; align-items: center; padding-left: 7px; position: absolute; left: 0; right: 0; bottom: 0; gap: 9px; }
.hthumb { flex: 1; height: 20px; background: #c8c8c8; }
.sash { height: 4px; flex: none; margin-top: 3px; background: #d8d8d8; border-top: 1px solid #bbb; }
.panel-h { height: 31px; flex: none; font-size: 22px; color: #1d7796; display: flex; align-items: center; padding: 3px 0 0 7px; border-bottom: 3px solid #dcdcdc; }
.panel-h.detail { height: 38px; border: 0; padding: 0 0 4px 7px; }
.param { display: grid; grid-template-columns: 64px 40px 88px 187px; grid-auto-rows: 28px; margin: 0 0 0 8px; width: 380px; border-left: 1px solid #ddd; border-right: 1px solid #e4e4e4; flex: none; }
.p-cell { border-right: 1px solid #ececec; border-bottom: 1px solid #ececec; padding-left: 7px; display: flex; align-items: center; font-size: 18px; overflow: hidden; white-space: nowrap; }
.p-cell.head { background: #f0f0f0; border-top: 1px solid #ddd; padding-top: 2px; }

.view { flex: 1; min-width: 0; display: flex; flex-direction: column; }
.tabs { height: 28px; flex: none; background: #fff; border-bottom: 1px solid #5b9db8; padding-left: 130px; }
.tab { width: 37px; height: 27px; background: #5b9db8; display: flex; align-items: center; gap: 3px; padding-left: 7px; color: #a6cbd9; font: 14px "Liberation Sans", sans-serif; }
.canvas { flex: 1; position: relative; overflow: hidden; background: linear-gradient(#b5b7b8, #e8e9ea); }
.model { position: absolute; left: 0; top: 0; }
.axis { position: absolute; color: #f3dcbc; font: 14px "Liberation Sans", sans-serif; }
.ax-z { left: 502px; top: 274px; color: #e0d8c8; }
.ax-y { left: 588px; top: 307px; }
.ax-x { left: 607px; top: 439px; }

.tag { position: absolute; left: 694px; top: 95px; width: 249px; height: 39px; background: #f2f2f2; border: 1px solid #c8c8c8; display: flex; align-items: stretch; }
.tag-grip { margin: 3px 8px 3px 3px; background-image: radial-gradient(#aaa 1px, transparent 1.200px); background-size: 3px 3px; background-repeat: repeat; width: 7px; }
.tag-inner { flex: 1; background: #fff; display: flex; align-items: center; padding: 0 0 1px 3px; font-size: 19px; }
.tag-name { width: 49px; }
.tag-arrow { width: 24px; font-size: 15px; }
.tag-val { width: 79px; font-size: 19px; }
.tag-deg { width: 15px; font-size: 16px; margin-top: -8px; }
.tag-ic { margin-right: 7px; }
.tag-side { width: 13px; display: flex; flex-direction: column; justify-content: center; gap: 3px; padding-left: 2px; }
.tag-side i { width: 0; height: 0; border-left: 7px solid #777; border-top: 2.500px solid transparent; border-bottom: 2.500px solid transparent; }

.wm-logo { position: absolute; left: 718px; top: 468px; }
.wm-text { position: absolute; left: 797px; top: 478px; color: rgba(255,255,255,.58); white-space: nowrap; }
.wm-main { font-weight: bold; font-size: 41px; line-height: 1; }
.wm-sub { font: bold 13px/1 "Liberation Sans", sans-serif; letter-spacing: 4.300px; margin-top: 6px; padding-left: 3px; }

/* dialog */
.dialog { position: absolute; left: 166px; top: 0; width: 407px; height: 669px; background: #eeeeee; display: flex; flex-direction: column; align-items: center; box-shadow: -1px 0 0 #dcdcdc; }
.dlg-title { width: 100%; height: 33px; background: #5b9db8; color: #fff; display: flex; align-items: center; flex: none; padding: 0 13px 0 11px; }
.dlg-name { font-size: 22px; margin-left: 11px; flex: 1; }
.dlg-reset { margin-right: 15px; }
.sec { width: 395px; background: #fff; flex: none; margin-top: 4px; box-shadow: 0 1px 0 #dedede; }
.sec-obj { margin-top: 3px; height: 397px; }
.sec-filter { height: 108px; }
.sec-fold { height: 31px; overflow: hidden; }
.sec-h { height: 32px; margin-bottom: 4px; display: flex; align-items: center; justify-content: space-between; padding: 0 6px 0 7px; font-size: 22px; color: #1d7796; }
.sec-h span { margin-top: -1px; }
.radios { margin: 6px 9px 0; height: 69px; background: #eeeeee; border-top: 1px solid #ddd; border-bottom: 1px solid #ddd; display: grid; grid-template-columns: 86px 86px 1fr; grid-auto-rows: 30px; padding: 4px 0 0 5px; }
.r { display: flex; align-items: center; gap: 4px; color: #b3b3b3; font-size: 18px; white-space: nowrap; }
.r i { width: 18px; height: 18px; border-radius: 50%; background: #fff; border: 1px solid #cfcfcf; flex: none; display: flex; align-items: center; justify-content: center; }
.r i.sel::after { content: ""; width: 10px; height: 10px; border-radius: 50%; background: #c4c4c4; }
.yellow { margin: 2px 9px 0; height: 32px; display: flex; background: #ffdc70; gap: 2px; }
.y-main { width: 270px; display: flex; align-items: center; gap: 5px; padding-left: 3px; font-size: 18px; }
.y-btn { width: 24px; height: 24px; margin-top: 4px; background: #fff; border: 1px solid #bbb; display: flex; align-items: center; justify-content: center; }
.y-end { width: 31px; display: flex; align-items: center; justify-content: center; }
.y-drop { width: 21px; display: flex; align-items: center; justify-content: center; border-left: 1px solid #f0ce64; }
.grp { margin: 3px 9px 0; background: #eeeeee; height: 175px; border-top: 1px solid #dddddd; border-bottom: 1px solid #ddd; }
.grp-h { height: 30px; display: flex; align-items: center; justify-content: space-between; padding: 0 6px 0 9px; font-size: 18px; color: #1d7796; }
.grp-h span { margin-top: -3px; }
.list-wrap { display: flex; padding: 7px 0 0 9px; gap: 3px; }
.list { width: 332px; background: #fff; border: 1px solid #dfdfdf; }
.l-row { display: flex; height: 28px; font-size: 18px; white-space: nowrap; border-bottom: 1px solid #ededed; position: relative; }
.l-row.short { height: 22px; }
.l-a { width: 150px; padding: 4px 0 0 22px; border-right: 1px solid #e4e4e4; flex: none; }
.l-b { flex: 1; overflow: hidden; padding: 4px 0 0 5px; min-width: 0; letter-spacing: .2px; }
.l-row.sel { margin-left: 19px; background: #87bdd0; outline: 1px dotted #333; outline-offset: -1px; }
.l-row.sel .l-a { width: 131px; padding-left: 3px; }
.l-row:not(.short)::before { content: ""; position: absolute; left: 9px; top: 14px; width: 10px; border-top: 1px dotted #999; }
.l-row.sel::before { left: -10px; }
.l-scroll { height: 22px; display: flex; align-items: center; gap: 5px; padding: 0 6px; }
.l-thumb { width: 259px; height: 19px; margin-right: 31px; background: #c8c8c8; flex: none; }
.l-btns { display: flex; flex-direction: column; gap: 2px; }
.l-btn { width: 24px; height: 24px; background: #e9f0f3; border: 1px solid #cfd8dc; display: flex; align-items: center; justify-content: center; }
.l-btn.off { background: #eeeeee; border-color: #ddd; }
.grp-method { height: 69px; margin-top: 2px; }
.methods { display: flex; padding-left: 4px; align-items: center; }
.m { display: flex; align-items: center; justify-content: center; height: 32px; }
.m.on { width: 32px; background: #87bdd0; }
.m2 { margin-left: 6px; }
.m3 { margin-left: 11px; }
.m4 { margin-left: 11px; }
.count { font-size: 18px; padding: 7px 0 0 9px; height: 32px; white-space: nowrap; }
.filters { display: flex; gap: 2px; padding-left: 9px; }
.f { width: 32px; height: 32px; background: #ffdc70; display: flex; align-items: center; justify-content: center; }
.f-add { background: #fff; border: 1px solid #c8c8c8; }
.dlg-foot { display: flex; gap: 5px; align-self: flex-end; margin: 12px 16px 0 0; }
.btn { width: 66px; height: 32px; background: #dcdcdc; border: 1px solid #b8b8b8; display: flex; align-items: center; justify-content: center; font-size: 18px; color: #222; }
.btn.primary { background: #6aa8c4; border-color: #6aa8c4; color: #d9ecf3; }
```
